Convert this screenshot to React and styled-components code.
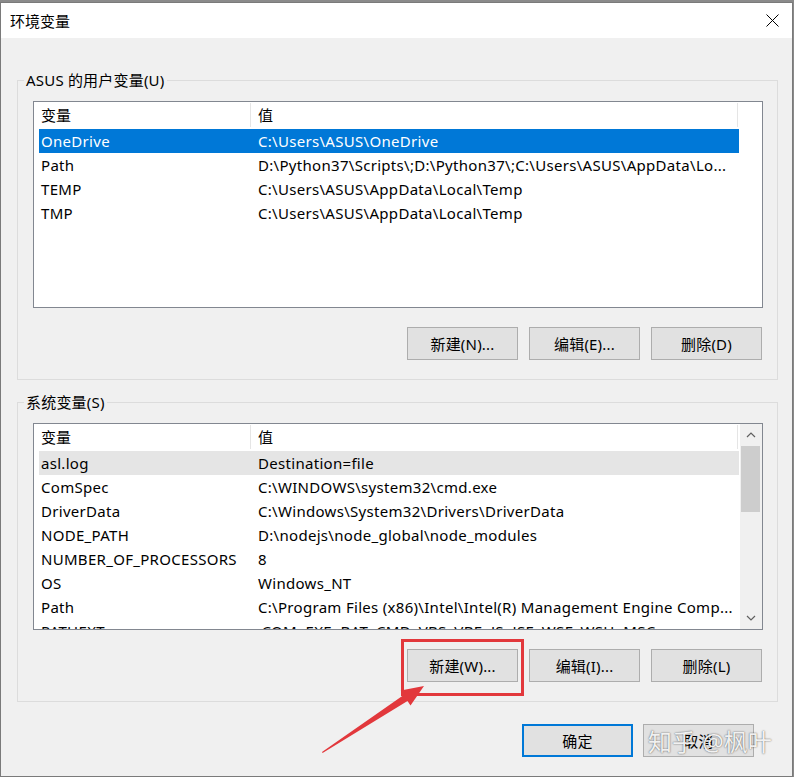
import React from 'react';
import styled, { createGlobalStyle } from 'styled-components';

const GlobalStyle = createGlobalStyle`
  html, body {
    margin: 0;
    padding: 0;
    background: #8a8a8a;
  }
  body {
    font-family: 'Noto Sans', 'Noto Sans CJK SC', sans-serif;
    font-size: 15px;
    color: #000;
  }
  * { box-sizing: border-box; }
`;

const Page = styled.div`
  position: relative;
  width: 794px;
  height: 777px;
  padding-top: 2px;
  background: #8a8a8a;
  overflow: hidden;
`;

const Window = styled.div`
  width: 793px;
  height: 775px;
  border: 1px solid #7a7a7a;
  background: #f0f0f0;
  display: flex;
  flex-direction: column;
`;

const TitleBar = styled.div`
  height: 35px;
  flex: none;
  background: #fff;
  display: flex;
  align-items: center;
  justify-content: space-between;
  padding-left: 9px;
`;

const Title = styled.span`
  font-size: 15px;
  line-height: 20px;
`;

const CloseButton = styled.div`
  width: 40px;
  height: 35px;
  display: flex;
  align-items: center;
  justify-content: center;
`;

const Body = styled.div`
  flex: 1;
  padding: 32px 0 0 16px;
  display: flex;
  flex-direction: column;
`;

const GroupBox = styled.fieldset`
  width: 761px;
  min-width: 0;
  margin: ${p => (p.$first ? '0' : '12px')} 0 0 0;
  padding: 11px 14px 19px 6px;
  border: 1px solid #dcdcdc;
`;

const Legend = styled.legend`
  padding: 0 2px;
  font-size: 15px;
  line-height: 20px;
  letter-spacing: 0.2px;
`;

const GroupInner = styled.div`
  margin-left: 9px;
`;

const List = styled.div`
  height: 207px;
  border: 1px solid #828790;
  background: #fff;
  display: flex;
  overflow: hidden;
`;

const ListMain = styled.div`
  flex: 1;
  min-width: 0;
  overflow: hidden;
`;

const HeaderRow = styled.div`
  height: 27px;
  display: grid;
  grid-template-columns: 217px 487px;
`;

const HeaderCell = styled.div`
  padding-left: 7px;
  border-right: 1px solid #e5e5e5;
  margin: 1px 0 2px;
  line-height: 24px;
`;

const Row = styled.div`
  height: 24px;
  width: 700px;
  margin-left: 5px;
  display: grid;
  grid-template-columns: 217px 1fr;
  line-height: 24px;
  letter-spacing: 0.3px;
  background: ${p => (p.$selected ? '#0078d7' : p.$dim ? '#e5e5e5' : 'transparent')};
  color: ${p => (p.$selected ? '#fff' : '#000')};
`;

const Cell = styled.div`
  padding-left: 2px;
  white-space: nowrap;
  overflow: hidden;
`;

const ScrollBar = styled.div`
  width: 22px;
  flex: none;
  background: #f0f0f0;
  display: flex;
  flex-direction: column;
`;

const ScrollArrow = styled.div`
  height: 22px;
  flex: none;
  display: flex;
  align-items: center;
  justify-content: center;
`;

const ScrollTrack = styled.div`
  flex: 1;
`;

const Thumb = styled.div`
  height: 66px;
  margin: 0 2px 0 1px;
  background: #cdcdcd;
`;

const ButtonRow = styled.div`
  display: flex;
  justify-content: flex-end;
  gap: 11px;
  margin-top: 19px;
  padding-right: 1px;
`;

const Button = styled.div`
  width: 111px;
  height: 33px;
  background: #e1e1e1;
  border: ${p => (p.$default ? '2px solid #0078d7' : '1px solid #adadad')};
  display: flex;
  align-items: center;
  justify-content: center;
  font-size: 15px;
  letter-spacing: 0.2px;
`;

const Footer = styled.div`
  display: flex;
  justify-content: flex-end;
  gap: 10px;
  margin-top: 22px;
  padding-right: 38px;
`;

const Highlight = styled.div`
  position: absolute;
  left: 401px;
  top: 639px;
  width: 123px;
  height: 57px;
  border: 3px solid #e2383c;
`;

const ArrowLayer = styled.svg`
  position: absolute;
  left: 0;
  top: 0;
  pointer-events: none;
`;

const Watermark = styled.div`
  position: absolute;
  left: 648px;
  top: 726px;
  font-size: 24px;
  line-height: 32px;
  color: rgba(255, 255, 255, 0.92);
  text-shadow: 0 0 2px rgba(0, 0, 0, 0.45), 0 0 1px rgba(0, 0, 0, 0.35);
  white-space: nowrap;
`;

const userVars = [
  ['OneDrive', 'C:\\Users\\ASUS\\OneDrive'],
  ['Path', 'D:\\Python37\\Scripts\\;D:\\Python37\\;C:\\Users\\ASUS\\AppData\\Lo...'],
  ['TEMP', 'C:\\Users\\ASUS\\AppData\\Local\\Temp'],
  ['TMP', 'C:\\Users\\ASUS\\AppData\\Local\\Temp'],
];

const sysVars = [
  ['asl.log', 'Destination=file'],
  ['ComSpec', 'C:\\WINDOWS\\system32\\cmd.exe'],
  ['DriverData', 'C:\\Windows\\System32\\Drivers\\DriverData'],
  ['NODE_PATH', 'D:\\nodejs\\node_global\\node_modules'],
  ['NUMBER_OF_PROCESSORS', '8'],
  ['OS', 'Windows_NT'],
  ['Path', 'C:\\Program Files (x86)\\Intel\\Intel(R) Management Engine Comp...'],
  ['PATHEXT', '.COM;.EXE;.BAT;.CMD;.VBS;.VBE;.JS;.JSE;.WSF;.WSH;.MSC'],
];

function Chevron({ up }) {
  return (
    <svg width="10" height="6" viewBox="0 0 10 6">
      <path
        d={up ? 'M1 5 L5 1 L9 5' : 'M1 1 L5 5 L9 1'}
        fill="none"
        stroke="#606060"
        strokeWidth="1.2"
      />
    </svg>
  );
}

function VarList({ rows, selected, dim, scroll }) {
  return (
    <List>
      <ListMain>
        <HeaderRow>
          <HeaderCell>变量</HeaderCell>
          <HeaderCell>值</HeaderCell>
        </HeaderRow>
        {rows.map(([name, value], i) => (
          <Row key={name + i} $selected={i === selected} $dim={i === dim}>
            <Cell>{name}</Cell>
            <Cell>{value}</Cell>
          </Row>
        ))}
      </ListMain>
      {scroll && (
        <ScrollBar>
          <ScrollArrow><Chevron up /></ScrollArrow>
          <ScrollTrack><Thumb /></ScrollTrack>
          <ScrollArrow><Chevron /></ScrollArrow>
        </ScrollBar>
      )}
    </List>
  );
}

export default function App() {
  return (
    <Page>
      <GlobalStyle />
      <Window>
        <TitleBar>
          <Title>环境变量</Title>
          <CloseButton>
            <svg width="13" height="13" viewBox="0 0 13 13">
              <path d="M0.5 0.5 L12.5 12.5 M12.5 0.5 L0.5 12.5" stroke="#000" strokeWidth="1" />
            </svg>
          </CloseButton>
        </TitleBar>
        <Body>
          <GroupBox $first>
            <Legend>ASUS 的用户变量(U)</Legend>
            <GroupInner>
              <VarList rows={userVars} selected={0} />
              <ButtonRow>
                <Button>新建(N)...</Button>
                <Button>编辑(E)...</Button>
                <Button>删除(D)</Button>
              </ButtonRow>
            </GroupInner>
          </GroupBox>
          <GroupBox>
            <Legend>系统变量(S)</Legend>
            <GroupInner>
              <VarList rows={sysVars} dim={0} scroll />
              <ButtonRow>
                <Button>新建(W)...</Button>
                <Button>编辑(I)...</Button>
                <Button>删除(L)</Button>
              </ButtonRow>
            </GroupInner>
          </GroupBox>
          <Footer>
            <Button $default>确定</Button>
            <Button>取消</Button>
          </Footer>
        </Body>
      </Window>
      <Highlight />
      <ArrowLayer width="794" height="777" viewBox="0 0 794 777">
        <polygon
          points="322,752 403.7,695.1 400.7,690.5 424,686 410.5,705.5 407.5,700.9 322.6,752.9"
          fill="#e2383c"
        />
      </ArrowLayer>
      <Watermark>知乎 @枫叶</Watermark>
    </Page>
  );
}
